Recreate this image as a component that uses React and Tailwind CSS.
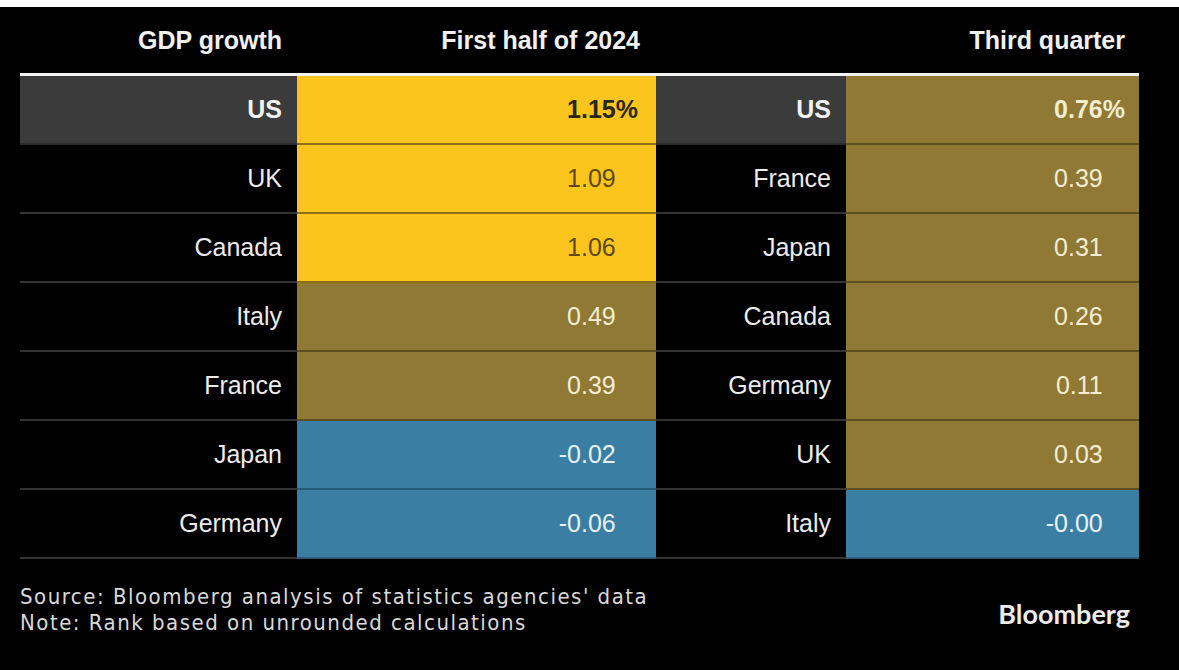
const left = [
  { name: "US", value: "1.15", tone: "yellow", bold: true },
  { name: "UK", value: "1.09", tone: "yellow" },
  { name: "Canada", value: "1.06", tone: "yellow" },
  { name: "Italy", value: "0.49", tone: "olive" },
  { name: "France", value: "0.39", tone: "olive" },
  { name: "Japan", value: "-0.02", tone: "blue" },
  { name: "Germany", value: "-0.06", tone: "blue" },
]

const right = [
  { name: "US", value: "0.76", tone: "olive", bold: true },
  { name: "France", value: "0.39", tone: "olive" },
  { name: "Japan", value: "0.31", tone: "olive" },
  { name: "Canada", value: "0.26", tone: "olive" },
  { name: "Germany", value: "0.11", tone: "olive" },
  { name: "UK", value: "0.03", tone: "olive" },
  { name: "Italy", value: "-0.00", tone: "blue" },
]

const tones = {
  yellow: "bg-[#fcc51d] border-[#8c6f14]",
  olive: "bg-[#8f7934] border-[#5e4f1f]",
  blue: "bg-[#3a7fa3] border-[#2a5d7a]",
}

const valueText = {
  yellow: "text-[#5c4a0e]",
  olive: "text-[#f4edd2]",
  blue: "text-[#e9f0f3]",
}

function NameCell({ row }) {
  return (
    <div
      className={`flex h-[69px] items-center justify-end border-b-2 pr-[15px] ${
        row.bold
          ? "bg-[#3b3b3b] border-[#2a2a2a] font-bold text-[#f2f2f2]"
          : "border-[#333333] text-[#ececec]"
      }`}
    >
      {row.name}
    </div>
  )
}

function ValueCell({ row, pad }) {
  const color = row.bold && row.tone === "yellow" ? "text-[#2b2616]" : valueText[row.tone]
  return (
    <div
      className={`flex h-[69px] items-center justify-end border-b-2 ${pad} ${tones[row.tone]} ${color} ${
        row.bold ? "font-bold" : ""
      }`}
    >
      {row.value}
      <span className={row.bold ? "" : "invisible"}>%</span>
    </div>
  )
}

export default function App() {
  return (
    <div className="h-[670px] w-[1179px] overflow-hidden bg-black font-['Liberation_Sans',Arial,sans-serif]">
      <div className="h-[7px] bg-white" />
      <div className="ml-[20px] w-[1119px]">
        <div className="grid h-[66px] grid-cols-[277px_359px_190px_293px] items-center pt-[1px] text-[25px] font-bold text-[#f1f1f1]">
          <div className="pr-[15px] text-right">GDP growth</div>
          <div className="pr-[16px] text-right">First half of 2024</div>
          <div />
          <div className="pr-[14px] text-right">Third quarter</div>
        </div>
        <div className="h-[3px] bg-[#f2f2f2]" />
        <div className="grid grid-cols-[277px_359px_190px_293px] text-[25px]">
          {left.map((row, i) => (
            <div key={row.name + i} className="contents">
              <NameCell row={row} />
              <ValueCell row={row} pad="pr-[18px]" />
              <NameCell row={right[i]} />
              <ValueCell row={right[i]} pad="pr-[14px]" />
            </div>
          ))}
        </div>
        <div className="mt-[25px] flex items-end justify-between">
          <div className="font-['DejaVu_Sans_Condensed','DejaVu_Sans',sans-serif] text-[22px] leading-[26px] tracking-[1.5px] text-[#d9d9d9]">
            <p>Source: Bloomberg analysis of statistics agencies' data</p>
            <p>Note: Rank based on unrounded calculations</p>
          </div>
          <div className="mr-[9px] mb-[2px] font-['Lato',sans-serif] text-[27px] font-bold text-[#ececec]">
            Bloomberg
          </div>
        </div>
      </div>
    </div>
  )
}
